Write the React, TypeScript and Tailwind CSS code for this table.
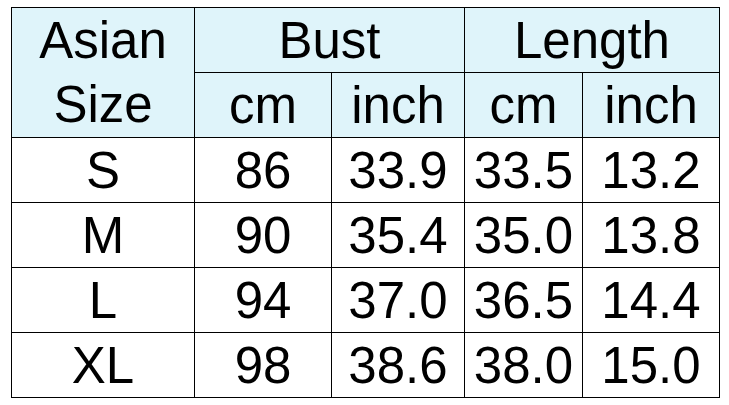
import React from 'react';

const rows = [
  ['S', '86', '33.9', '33.5', '13.2'],
  ['M', '90', '35.4', '35.0', '13.8'],
  ['L', '94', '37.0', '36.5', '14.4'],
  ['XL', '98', '38.6', '38.0', '15.0'],
];

const cell = 'border-[1.5px] border-black p-0 text-center align-middle leading-none';

export default function App() {
  return (
    <div className="w-[729px] h-[405px] bg-white pl-[11px] pt-[7px] font-['Liberation_Sans',Arial,sans-serif] text-black text-[51px]">
      <table className="table-fixed border-collapse w-[708px]">
        <colgroup>
          <col className="w-[183px]" />
          <col className="w-[137px]" />
          <col className="w-[133px]" />
          <col className="w-[118px]" />
          <col className="w-[137px]" />
        </colgroup>
        <thead className="bg-[#dff4fa]">
          <tr className="h-[65px]">
            <th rowSpan={2} className={`${cell} font-normal`}>
              <div className="leading-[64px]">Asian</div>
              <div className="leading-[64px]">Size</div>
            </th>
            <th colSpan={2} className={`${cell} font-normal`}>Bust</th>
            <th colSpan={2} className={`${cell} font-normal`}>Length</th>
          </tr>
          <tr className="h-[65px]">
            <th className={`${cell} font-normal`}>cm</th>
            <th className={`${cell} font-normal`}>inch</th>
            <th className={`${cell} font-normal`}>cm</th>
            <th className={`${cell} font-normal`}>inch</th>
          </tr>
        </thead>
        <tbody>
          {rows.map((r) => (
            <tr key={r[0]} className="h-[65px]">
              {r.map((v, i) => (
                <td key={i} className={cell}>{v}</td>
              ))}
            </tr>
          ))}
        </tbody>
      </table>
    </div>
  );
}
